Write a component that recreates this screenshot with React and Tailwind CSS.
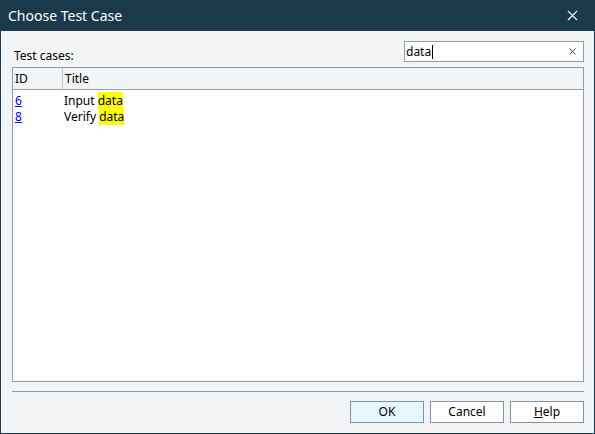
import { X } from "lucide-react";

const rows = [
  { id: "6", pre: "Input ", hit: "data" },
  { id: "8", pre: "Verify ", hit: "data" },
];

function Button({ children, primary }) {
  return (
    <button
      className={
        primary
          ? "h-[22px] w-[74px] border border-[#8290a8] bg-[#e5f6fd] text-[12px] text-black"
          : "h-[22px] w-[74px] border border-[#8290a8] bg-white text-[12px] text-black"
      }
    >
      {children}
    </button>
  );
}

export default function App() {
  return (
    <div
      className="flex h-[434px] w-[595px] flex-col border-x border-b border-[#1a3a4c] bg-[#f3f4f6] text-black"
      style={{ fontFamily: '"Noto Sans", "Open Sans", sans-serif' }}
    >
      <div className="flex h-[31px] shrink-0 items-center justify-between bg-[#1a3a4c] pl-[7px] pr-[13px] text-white">
        <span className="text-[14px] leading-none">Choose Test Case</span>
        <X size={17} strokeWidth={1.5} />
      </div>

      <div className="flex flex-1 flex-col pl-[11px] pr-[10px] pt-[10px]">
        <div className="flex h-[21px] items-end justify-between">
          <span className="pl-[2px] text-[12px] leading-none">Test cases:</span>
          <div className="flex h-[21px] w-[180px] items-center justify-between border border-[#8e9bb0] bg-white pl-[1px] pr-[5px]">
            <span className="flex items-center text-[12px] leading-none">
              data
              <span className="ml-[1px] inline-block h-[14px] w-px bg-black" />
            </span>
            <X size={11} strokeWidth={2} className="text-[#333]" />
          </div>
        </div>

        <div className="mt-[5px] flex h-[315px] flex-col border border-[#8e9bb0] bg-white">
          <div className="flex h-[22px] shrink-0 border-b border-[#9aa3b0] bg-[#f3f4f6] text-[12px]">
            <div className="flex w-[50px] items-center border-r border-[#c2c7cf] pl-[2px]">ID</div>
            <div className="flex items-center pl-[2px]">Title</div>
          </div>
          <div className="pt-[3px]">
            {rows.map((r) => (
              <div key={r.id} className="flex h-[16px] items-center text-[12px]">
                <a className="w-[51px] pl-[2px] text-[#0000ee] underline">{r.id}</a>
                <span>
                  {r.pre}
                  <span className="bg-[#ffff00]">{r.hit}</span>
                </span>
              </div>
            ))}
          </div>
        </div>

        <div className="mt-[9px] h-px bg-[#8e9bb0]" />

        <div className="mt-[9px] flex justify-end gap-[6px]">
          <Button primary>OK</Button>
          <Button>Cancel</Button>
          <Button>
            <span className="underline">H</span>elp
          </Button>
        </div>
      </div>
    </div>
  );
}
